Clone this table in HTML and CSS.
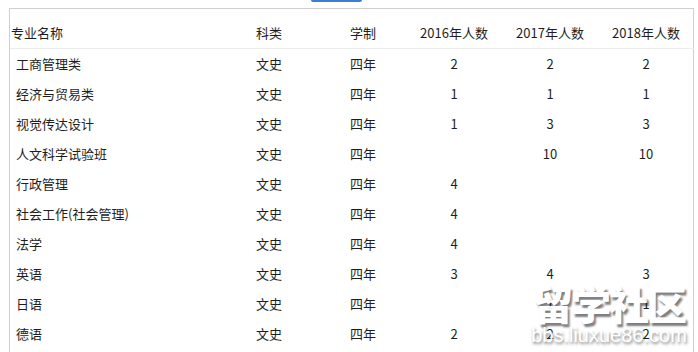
FILE: index.html
```html
<!DOCTYPE html>
<html lang="zh-CN">
<head>
    <meta charset="UTF-8">
    <meta name="viewport" content="width=device-width, initial-scale=1.0">
    <title>专业招生人数</title>
    <link rel="stylesheet" href="styles.css">
</head>
<body>
    <div class="tab"></div>
    <div class="box">
        <table class="table">
            <tr><th class="name">专业名称</th><th class="kind">科类</th><th class="year">学制</th><th class="num">2016年人数</th><th class="num">2017年人数</th><th class="num">2018年人数</th></tr>
            <tr><td class="name">工商管理类</td><td>文史</td><td>四年</td><td class="num">2</td><td class="num">2</td><td class="num">2</td></tr>
            <tr><td class="name">经济与贸易类</td><td>文史</td><td>四年</td><td class="num">1</td><td class="num">1</td><td class="num">1</td></tr>
            <tr><td class="name">视觉传达设计</td><td>文史</td><td>四年</td><td class="num">1</td><td class="num">3</td><td class="num">3</td></tr>
            <tr><td class="name">人文科学试验班</td><td>文史</td><td>四年</td><td class="num"></td><td class="num">10</td><td class="num">10</td></tr>
            <tr><td class="name">行政管理</td><td>文史</td><td>四年</td><td class="num">4</td><td class="num"></td><td class="num"></td></tr>
            <tr><td class="name">社会工作(社会管理)</td><td>文史</td><td>四年</td><td class="num">4</td><td class="num"></td><td class="num"></td></tr>
            <tr><td class="name">法学</td><td>文史</td><td>四年</td><td class="num">4</td><td class="num"></td><td class="num"></td></tr>
            <tr><td class="name">英语</td><td>文史</td><td>四年</td><td class="num">3</td><td class="num">4</td><td class="num">3</td></tr>
            <tr><td class="name">日语</td><td>文史</td><td>四年</td><td class="num"></td><td class="num">1</td><td class="num">1</td></tr>
            <tr><td class="name">德语</td><td>文史</td><td>四年</td><td class="num">2</td><td class="num">2</td><td class="num">2</td></tr>
        </table>
        <div class="mark">
            <div class="mark-big">留学社区</div>
            <div class="mark-small">bbs.liuxue86.com</div>
        </div>
    </div>
</body>
</html>
```

FILE: styles.css
```css
body{
    margin: 0;
    background-color: #fff;
    font-family: "Noto Sans CJK SC", "Noto Sans", sans-serif;
    font-size: 13px;
    color: #1e1e1e;
}
.tab{
    width: 51px;
    height: 2px;
    margin-left: 311px;
    background-color: #3b7fd4;
    border-radius: 0 0 3px 3px;
}
.box{
    position: relative;
    margin: 6px 0 0 9px;
    width: 683px;
    height: 343px;
    border: solid #cfcfcf 1px;
    border-bottom: none;
}
.table{
    width: 683px;
    border-collapse: collapse;
    table-layout: fixed;
}
.table th{
    padding: 9px 0 0;
    line-height: 30px;
    font-weight: normal;
    text-align: left;
    border-bottom: solid #ececec 1px;
}
.table td{
    padding: 0;
    line-height: 30px;
    text-align: left;
}
.table .name{
    width: 245px;
}
.table th.name{
    padding-left: 1px;
}
.table td.name{
    padding-left: 6px;
}
.table .kind{
    width: 94px;
}
.table .year{
    width: 56px;
}
.table .num{
    width: 96px;
    text-align: center;
}
.mark{
    position: absolute;
    left: 519px;
    top: 272px;
    width: 160px;
    text-align: center;
    color: #fff;
    pointer-events: none;
}
.mark .mark-big{
    font-size: 40px;
    font-weight: 900;
    line-height: 44px;
    letter-spacing: -2px;
    text-shadow: 2px 3px 2px rgba(0, 0, 0, 0.55);
    opacity: 0.92;
}
.mark .mark-small{
    font-family: "Liberation Sans", sans-serif;
    font-size: 20px;
    line-height: 20px;
    text-shadow: 1px 2px 3px rgba(0, 0, 0, 0.55);
    opacity: 0.92;
}
```
